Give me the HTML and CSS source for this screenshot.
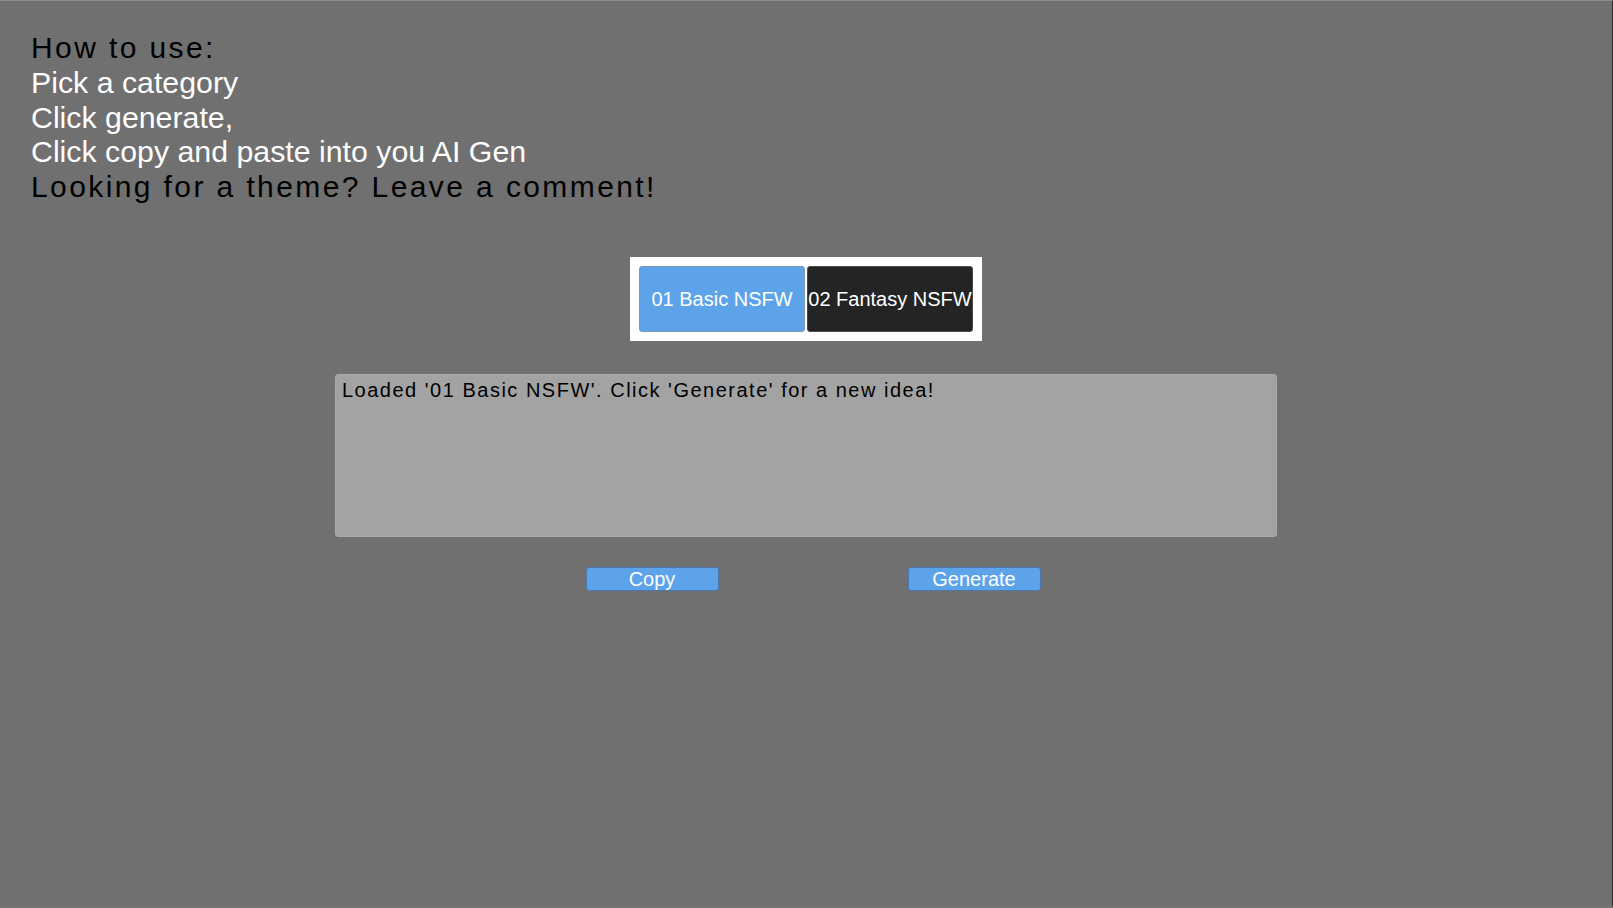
FILE: index.html
```html
<!DOCTYPE html>
<html lang="en">
<head>
<meta charset="utf-8">
<title>Prompt Generator</title>
<link rel="stylesheet" href="styles.css">
</head>
<body>
<div class="app">
  <div class="instructions">
    <div class="line dark">How to use:</div>
    <div class="line light">Pick a category</div>
    <div class="line light">Click generate,</div>
    <div class="line light">Click copy and paste into you AI Gen</div>
    <div class="line dark">Looking for a theme? Leave a comment!</div>
  </div>
  <div class="tabs">
    <button class="tab tab-active">01 Basic NSFW</button>
    <button class="tab tab-dark">02 Fantasy NSFW</button>
  </div>
  <div class="output">Loaded '01 Basic NSFW'. Click 'Generate' for a new idea!</div>
  <div class="actions">
    <button class="action">Copy</button>
    <button class="action">Generate</button>
  </div>
</div>
</body>
</html>
```

FILE: styles.css
```css
html, body {
  margin: 0;
  padding: 0;
  background: #707070;
}

.app {
  box-sizing: border-box;
  height: 908px;
  background: #707070;
  border-top: 1px solid #8c8c8c;
  border-right: 1px solid #2e2e2e;
  border-bottom: 3px solid #757575;
  padding-top: 30px;
  font-family: "Liberation Sans", Arial, sans-serif;
  display: flex;
  flex-direction: column;
}

.instructions {
  padding-left: 31px;
}

.line {
  height: 34.8px;
  line-height: 34.8px;
  white-space: nowrap;
}

.line.dark {
  color: #000;
  font-size: 30px;
  letter-spacing: 2.4px;
}

.line.light {
  color: #fff;
  font-size: 30.3px;
}

.tabs {
  box-sizing: border-box;
  width: 352px;
  height: 84px;
  margin: 52px auto 0;
  padding: 9px;
  background: #fff;
  display: flex;
  gap: 2px;
}

.tab {
  box-sizing: border-box;
  width: 166px;
  height: 66px;
  padding: 2px 0 0;
  border-radius: 3px;
  font-family: "Liberation Sans", Arial, sans-serif;
  font-size: 20px;
  color: #fff;
  white-space: nowrap;
  text-align: center;
  overflow: visible;
}

.tab-active {
  background: #5ca3ea;
  border: 1px solid #7f97b0;
}

.tab-dark {
  background: #242424;
  border: 1px solid #4a4a4a;
}

.output {
  box-sizing: border-box;
  width: 942px;
  height: 163px;
  margin: 33px auto 0;
  padding: 4px 6px;
  background: #a3a3a3;
  border: 1px solid #aaaaaa;
  border-radius: 3px;
  color: #000;
  font-size: 20px;
  letter-spacing: 1.5px;
  white-space: nowrap;
}

.actions {
  display: flex;
  justify-content: center;
  gap: 189px;
  padding-left: 14px;
  margin-top: 30px;
}

.action {
  box-sizing: border-box;
  width: 133px;
  height: 24px;
  padding: 0;
  background: #5ca3ea;
  border: 1px solid #4a78ad;
  border-radius: 3px;
  color: #fff;
  font-family: "Liberation Sans", Arial, sans-serif;
  font-size: 20px;
  line-height: 22px;
  text-align: center;
}
```
